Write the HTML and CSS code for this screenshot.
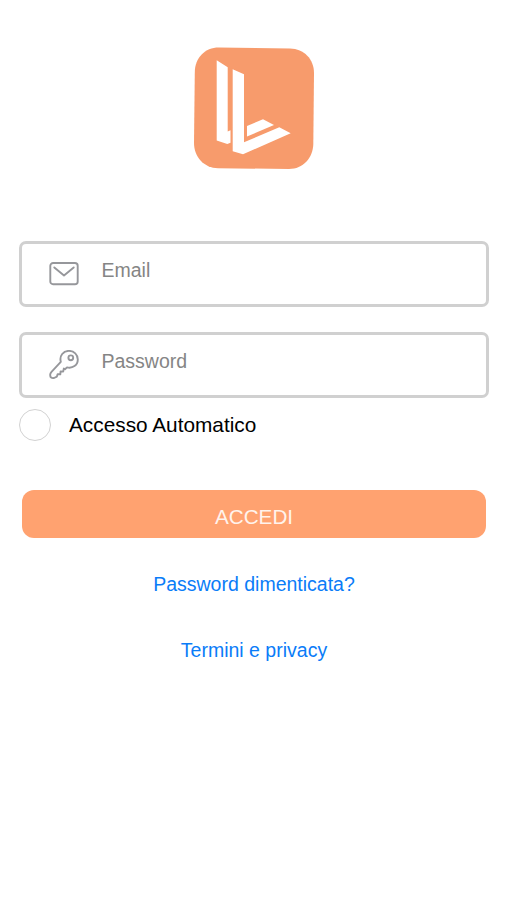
FILE: index.html
```html
<!DOCTYPE html>
<html lang="it">
<head>
<meta charset="utf-8">
<title>Accedi</title>
<link rel="stylesheet" href="styles.css">
</head>
<body>
<main class="login">
  <svg class="logo" width="120" height="122" viewBox="0 0 120 122">
    <path class="logo-tile" d="M25 .6 L96 1.4 C110 1.6 120 12 120 26 L119.3 97 C119 111 109 122 95 122 L24 121.2 C10 121 0 110 0 96 L.8 25 C1 11 11 .5 25 .6Z"/>
    <path class="logo-mark" d="M22.7 13.3 L33.7 20.2 V84.4 L36.5 83.2 V95.7 L33.3 97 L22.7 93.5Z"/>
    <path class="logo-mark" d="M38.7 22.3 L50 27.3 V95.3 L85.3 80.3 L96.7 86.3 L49 107.3 L38.7 104.3Z"/>
    <path class="logo-mark" d="M53 79 L69 72.2 L80 78 L53 89.5Z"/>
  </svg>
  <form class="form">
    <div class="field">
      <svg class="icon" width="30" height="30" viewBox="0 0 30 30">
        <rect x="1.3" y="4" width="27.4" height="21.2" rx="2.8"/>
        <path d="M5.3 8.4 L15 16.4 L24.7 8.4"/>
      </svg>
      <span class="hint">Email</span>
    </div>
    <div class="field">
      <svg class="icon" width="30" height="30" viewBox="0 0 30 30">
        <path d="M11.8 11.8 C10.2 5.6 14.4 .9 19.9 .9 C25 .9 28.8 4.6 28.8 9.4 C28.8 15.2 23.6 18.8 18 17.4 L16 19.2 L14.8 18.6 L14.2 21.6 L11.6 21.4 L11.3 24.3 L8.6 24.2 L7.9 26.6 L5 28 Q1.2 28.6 1.2 25.2 Q1 23.4 2.5 21.8Z"/>
        <circle cx="21.8" cy="7.8" r="2.4"/>
      </svg>
      <span class="hint">Password</span>
    </div>
    <div class="remember">
      <span class="radio"></span>
      <span>Accesso Automatico</span>
    </div>
    <button class="submit" type="button">ACCEDI</button>
  </form>
  <a class="link">Password dimenticata?</a>
  <a class="link">Termini e privacy</a>
</main>
</body>
</html>
```

FILE: styles.css
```css
* { box-sizing: border-box; }
body {
  margin: 0;
  background: #fff;
  font-family: "Liberation Sans", Arial, sans-serif;
}
.login {
  display: flex;
  flex-direction: column;
  align-items: center;
  padding: 47px 18px 0 19px;
}
.logo { display: block; margin-right: 1px; }
.logo-tile { fill: #f79b6c; }
.logo-mark { fill: #fff; }
.form {
  width: 100%;
  margin-top: 72px;
}
.field {
  display: flex;
  align-items: center;
  height: 66px;
  margin-bottom: 25px;
  padding: 0 27px;
  border: 3px solid #d0d0d0;
  border-radius: 7px;
}
.field + .field { margin-bottom: 11px; }
.icon {
  flex: none;
  margin-right: 22.5px;
  fill: none;
  stroke: #96979b;
  stroke-width: 1.9;
  stroke-linecap: round;
  stroke-linejoin: round;
}
.hint {
  font-size: 19.5px;
  line-height: 24px;
  margin-bottom: 8px;
  color: #858585;
}
.remember {
  display: flex;
  align-items: center;
  gap: 18px;
  height: 32px;
  font-size: 20.8px;
  color: #000;
}
.radio {
  width: 32px;
  height: 32px;
  border: 1.5px solid #d2d2d2;
  border-radius: 50%;
}
.submit {
  display: block;
  width: 464px;
  height: 48px;
  margin: 49px 0 0 3px;
  padding: 5px 0 0;
  border: 0;
  border-radius: 12px;
  background: #ffa270;
  color: #fff3ec;
  font: 20.7px "Liberation Sans", Arial, sans-serif;
}
.link {
  margin-top: 34px;
  font-size: 19.5px;
  line-height: 24px;
  color: #0a7cf8;
}
.link + .link { margin-top: 42px; }
```
